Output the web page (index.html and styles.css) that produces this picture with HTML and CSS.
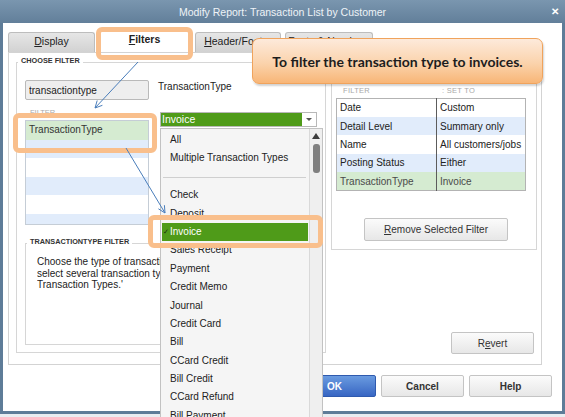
FILE: index.html
```html
<!DOCTYPE html>
<html lang="en">
  <head>
    <meta charset="UTF-8" />
    <title>Modify Report: Transaction List by Customer</title>
    <link rel="stylesheet" href="styles.css">
  </head>
  <body>
    <div class="dialog">
      <div class="titlebar">
        <span></span>
        <span class="title">Modify Report: Transaction List by Customer</span>
        <span class="close">&#10005;</span>
      </div>

      <div class="dialog-body">
        <div class="tabs">
          <div class="tab tab-display"><u>D</u>isplay</div>
          <div class="tab tab-filters active"><u>F</u>ilters</div>
          <div class="tab tab-header"><u>H</u>eader/Footer</div>
          <div class="tab tab-fonts">Fo<u>n</u>ts &amp; Numbers</div>
        </div>

        <div class="panel">
          <div class="group choose">
            <div class="legend">CHOOSE FILTER</div>
            <div class="picker">
              <input class="search" type="text" value="transactiontype">
              <div class="field-label">TransactionType</div>

              <div class="filter-col">
                <div class="col-head">FILTER</div>
                <ul class="filter-list">
                  <li class="picked">TransactionType</li>
                  <li></li>
                  <li></li>
                  <li></li>
                  <li></li>
                  <li></li>
                </ul>
              </div>

              <div class="combo-wrap">
                <div class="combo">
                  <span class="combo-value">Invoice</span>
                  <span class="combo-arrow"></span>
                </div>
                <div class="popup">
                  <ul class="options">
                    <li>All</li>
                    <li>Multiple Transaction Types</li>
                    <li class="sep"></li>
                    <li>Check</li>
                    <li>Deposit</li>
                    <li class="selected">Invoice</li>
                    <li>Sales Receipt</li>
                    <li>Payment</li>
                    <li>Credit Memo</li>
                    <li>Journal</li>
                    <li>Credit Card</li>
                    <li>Bill</li>
                    <li>CCard Credit</li>
                    <li>Bill Credit</li>
                    <li>CCard Refund</li>
                    <li>Bill Payment</li>
                  </ul>
                  <div class="scroll">
                    <span class="scroll-up"></span>
                    <span class="thumb"></span>
                  </div>
                </div>
              </div>

              <div class="group type-filter">
                <div class="legend">TRANSACTIONTYPE FILTER</div>
                <p class="help-text">
                  Choose the type of transaction to include in the report. To<br>
                  select several transaction types, choose 'Multiple<br>
                  Transaction Types.'
                </p>
              </div>
            </div>
          </div>

          <div class="side">
            <div class="group current">
              <div class="legend">CURRENT FILTER CHOICES</div>
              <div class="current-head">
                <span class="head-filter">FILTER</span>
                <span>: SET TO</span>
              </div>
              <table class="choices">
                <tr><td>Date</td><td>Custom</td></tr>
                <tr class="alt"><td>Detail Level</td><td>Summary only</td></tr>
                <tr><td>Name</td><td>All customers/jobs</td></tr>
                <tr class="alt"><td>Posting Status</td><td>Either</td></tr>
                <tr class="on"><td>TransactionType</td><td>Invoice</td></tr>
              </table>
              <button class="btn remove"><u>R</u>emove Selected Filter</button>
            </div>
            <button class="btn revert">R<u>e</u>vert</button>
          </div>
        </div>

        <div class="footer">
          <button class="btn ok">OK</button>
          <button class="btn">Cancel</button>
          <button class="btn">Help</button>
        </div>
      </div>

      <div class="callout">To filter the transaction type to invoices.</div>

      <svg class="pointers" width="565" height="417" viewBox="0 0 565 417">
        <g fill="none" stroke="#4a7ebb" stroke-width="1">
          <line x1="138" y1="62" x2="95" y2="108" />
          <polyline points="102.4,105.3 95,108 97.2,100.5" />
          <line x1="126" y1="148" x2="165" y2="213" />
          <polyline points="158.4,208.8 165,213 164.4,205.2" />
        </g>
      </svg>
    </div>
  </body>
</html>
```

FILE: styles.css
```css
/* report options dialog */

* {
  box-sizing: border-box;
}

html,
body {
  margin: 0;
}

body {
  width: 565px;
  height: 417px;
  overflow: hidden;
  background: #e9edf1;
  font-family: "Liberation Sans", Arial, sans-serif;
  font-size: 10px;
  color: #262626;
}

ul {
  margin: 0;
  padding: 0;
  list-style: none;
}

.dialog {
  position: relative;
  width: 565px;
  height: 414px;
}

/* title bar */

.titlebar {
  height: 23px;
  display: grid;
  grid-template-columns: 1fr auto 1fr;
  align-items: center;
  background: linear-gradient(#7a96af, #627f9a);
  color: #eef3f7;
  font-size: 10.5px;
}

.close {
  justify-self: end;
  margin-right: 6px;
  font-size: 10px;
  font-weight: bold;
  color: #fff;
}

.dialog-body {
  height: 391px;
  background: #fff;
  border: 3px solid #5e7c98;
  border-top: 0;
  padding-top: 9px;
}

/* tabs */

.tabs {
  display: flex;
  align-items: flex-end;
  height: 20px;
  margin-left: 5px;
}

.tab {
  height: 20px;
  line-height: 16px;
  text-align: center;
  font-size: 10.5px;
  color: #222;
  background: linear-gradient(#e6e6e6, #d2d2d2);
  border: 1px solid #bdbdbd;
  border-bottom: 0;
  border-radius: 3px 3px 0 0;
}

.tab-display {
  width: 87px;
}

.tab-filters {
  width: 91px;
  margin-left: 4px;
}

.tab-header {
  width: 86px;
  margin-left: 5px;
}

.tab-fonts {
  width: 88px;
  margin-left: 4px;
}

.tab.active {
  position: relative;
  height: 22px;
  line-height: 17px;
  font-weight: bold;
  background: #fff;
  border-color: #fff;
}

.tab.active::after {
  content: "";
  position: absolute;
  left: -4px;
  right: -4px;
  top: -4px;
  bottom: -8px;
  border: 5px solid #f9bf8c;
  border-radius: 6px;
  z-index: 6;
}

/* tab page */

.panel {
  display: flex;
  align-items: flex-start;
  width: 534px;
  height: 313px;
  margin-left: 5px;
  border: 1px solid #d3d3d3;
}

.group {
  border: 1px solid #d6d6d6;
  background: #fff;
}

.legend {
  display: table;
  margin: -7px 0 0 1px;
  padding: 0 3px;
  line-height: 10px;
  font-size: 7.3px;
  font-weight: bold;
  color: #333;
  background: #fff;
}

.choose {
  width: 310px;
  height: 291px;
  margin: 9px 0 0 7px;
}

.picker {
  display: grid;
  grid-template-columns: 124px 164px;
  column-gap: 9px;
  align-items: start;
  margin: 14px 0 0 8px;
}

.search {
  width: 124px;
  height: 20px;
  margin: 0;
  padding: 0 3px;
  font: inherit;
  color: #222;
  background: #eeeeee;
  border: 1px solid #b9b9b9;
  border-radius: 2px;
}

.field-label {
  padding-top: 1px;
  line-height: 12px;
  color: #222;
}

.filter-col {
  position: relative;
}

/* highlight ring round the chosen filter */
.filter-col::after {
  content: "";
  position: absolute;
  left: -12px;
  right: -8px;
  top: 13px;
  height: 30px;
  border: 5px solid #f9bf8c;
  border-radius: 6px;
  z-index: 6;
}

.col-head {
  margin-top: 6px;
  height: 14px;
  line-height: 14px;
  padding-left: 5px;
  font-size: 7.5px;
  color: #aaa;
}

.filter-list {
  height: 105px;
  overflow: hidden;
  border: 1px solid #c5cdd6;
}

.filter-list li {
  height: 18.4px;
  line-height: 18px;
  padding-left: 3px;
  color: #333;
}

.filter-list li:nth-child(even) {
  background: #e1ecfb;
}

.filter-list li.picked {
  height: 19px;
  background: #d5ebd1;
}

/* transaction type combo and its open list */

.combo-wrap {
  position: relative;
  width: 163px;
  margin: 12px 0 0 2px;
}

.combo {
  display: flex;
  width: 157px;
  height: 15px;
  border: 1px solid #b8b8b8;
}

.combo-value {
  flex: 1;
  padding-left: 1px;
  line-height: 13px;
  font-size: 10.5px;
  color: #fff;
  background: #4f9b19;
}

.combo-arrow {
  position: relative;
  width: 14px;
  background: #fff;
}

.combo-arrow::before {
  content: "";
  position: absolute;
  left: 4px;
  top: 5px;
  border: 3px solid transparent;
  border-top: 3px solid #555;
}

.popup {
  position: absolute;
  left: 0;
  top: 16px;
  z-index: 5;
  display: flex;
  width: 163px;
  height: 300px;
  background: #f5f5f5;
  border: 1px solid #c2c2c2;
}

.options {
  flex: 1;
  padding: 2px 1px 0 1px;
}

.options li {
  height: 18.4px;
  line-height: 18.4px;
  padding-left: 8px;
  color: #222;
  white-space: nowrap;
}

.options li.sep {
  position: relative;
}

.options li.sep::before {
  content: "";
  position: absolute;
  left: 1px;
  right: 2px;
  top: 9px;
  border-top: 1px solid #cfcfcf;
}

.options li.selected {
  position: relative;
  color: #fff;
  background: #4f9b19;
}

.options li.selected::before {
  content: "\2713";
  position: absolute;
  left: 1px;
  top: 0;
  font-family: "DejaVu Sans", sans-serif;
  font-size: 7px;
  color: #1b2a10;
}

.options li.selected::after {
  content: "";
  position: absolute;
  left: -14px;
  right: -15px;
  top: -8px;
  bottom: -7px;
  border: 5px solid #f9bf8c;
  border-radius: 6px;
}

.scroll {
  display: flex;
  flex-direction: column;
  align-items: center;
  width: 13px;
  background: #efefef;
  border-left: 1px solid #d9d9d9;
}

.scroll-up {
  margin-top: 4px;
  border: 4px solid transparent;
  border-top: 0;
  border-bottom: 6px solid #3d3d3d;
}

.thumb {
  width: 7px;
  height: 29px;
  margin-top: 5px;
  background: #7f7f7f;
  border-radius: 3px;
}

.type-filter {
  grid-column: 1 / 3;
  height: 102px;
  margin-top: 18px;
}

.help-text {
  margin: 9px 0 0 11px;
  width: 280px;
  overflow: hidden;
  line-height: 11.7px;
  white-space: nowrap;
  color: #222;
}

/* current filter choices */

.side {
  display: flex;
  flex-direction: column;
  width: 206px;
  margin-left: 5px;
}

.current {
  height: 172px;
  margin-top: 25px;
}

.current-head {
  display: flex;
  margin-top: 4px;
  line-height: 10px;
  font-size: 7.5px;
  letter-spacing: 0.3px;
  color: #a8a8a8;
}

.head-filter {
  width: 99px;
  margin-left: 11px;
}

.choices {
  width: 190px;
  margin: 2px 0 0 4px;
  border-collapse: collapse;
  border: 1px solid #b3b3b3;
}

.choices td {
  height: 18.4px;
  padding: 0 0 0 3px;
  color: #222;
  white-space: nowrap;
}

.choices td:first-child {
  width: 100px;
  border-right: 1px solid #5c5c5c;
}

.choices tr.alt {
  background: #e1ecfb;
}

.choices tr.on {
  background: #d5ebd1;
}

.choices tr.on td {
  color: #4a4a4a;
}

.btn {
  height: 22px;
  margin: 0;
  padding: 0;
  font: inherit;
  color: #333;
  background: linear-gradient(#fbfbfb, #e7e7e7);
  border: 1px solid #c4c4c4;
  border-radius: 2px;
}

.remove {
  display: block;
  width: 144px;
  height: 23px;
  margin: 27px 0 0 32px;
}

.revert {
  align-self: flex-end;
  width: 83px;
  margin: 82px 3px 0 0;
}

/* dialog buttons */

.footer {
  display: flex;
  justify-content: flex-end;
  gap: 5px;
  margin-top: 10px;
  padding-right: 10px;
}

.footer .btn {
  width: 83px;
  font-weight: bold;
}

.footer .ok {
  color: #fff;
  background: linear-gradient(#6a9be0, #3866c3);
  border-color: #2f5aae;
}

/* overlays */

.callout {
  position: absolute;
  left: 252px;
  top: 38px;
  z-index: 7;
  width: 291px;
  height: 46px;
  display: flex;
  align-items: center;
  justify-content: center;
  font-family: Lato, "Open Sans", sans-serif;
  font-size: 14px;
  font-weight: bold;
  color: #1d1d1d;
  background: linear-gradient(#fdeadb, #fbd3ac 55%, #f8b677);
  border: 1px solid #f0a35c;
  border-radius: 7px;
  box-shadow: 1px 2px 2px rgba(0, 0, 0, 0.18);
}

.pointers {
  position: absolute;
  left: 0;
  top: 0;
  z-index: 8;
  pointer-events: none;
}
```
